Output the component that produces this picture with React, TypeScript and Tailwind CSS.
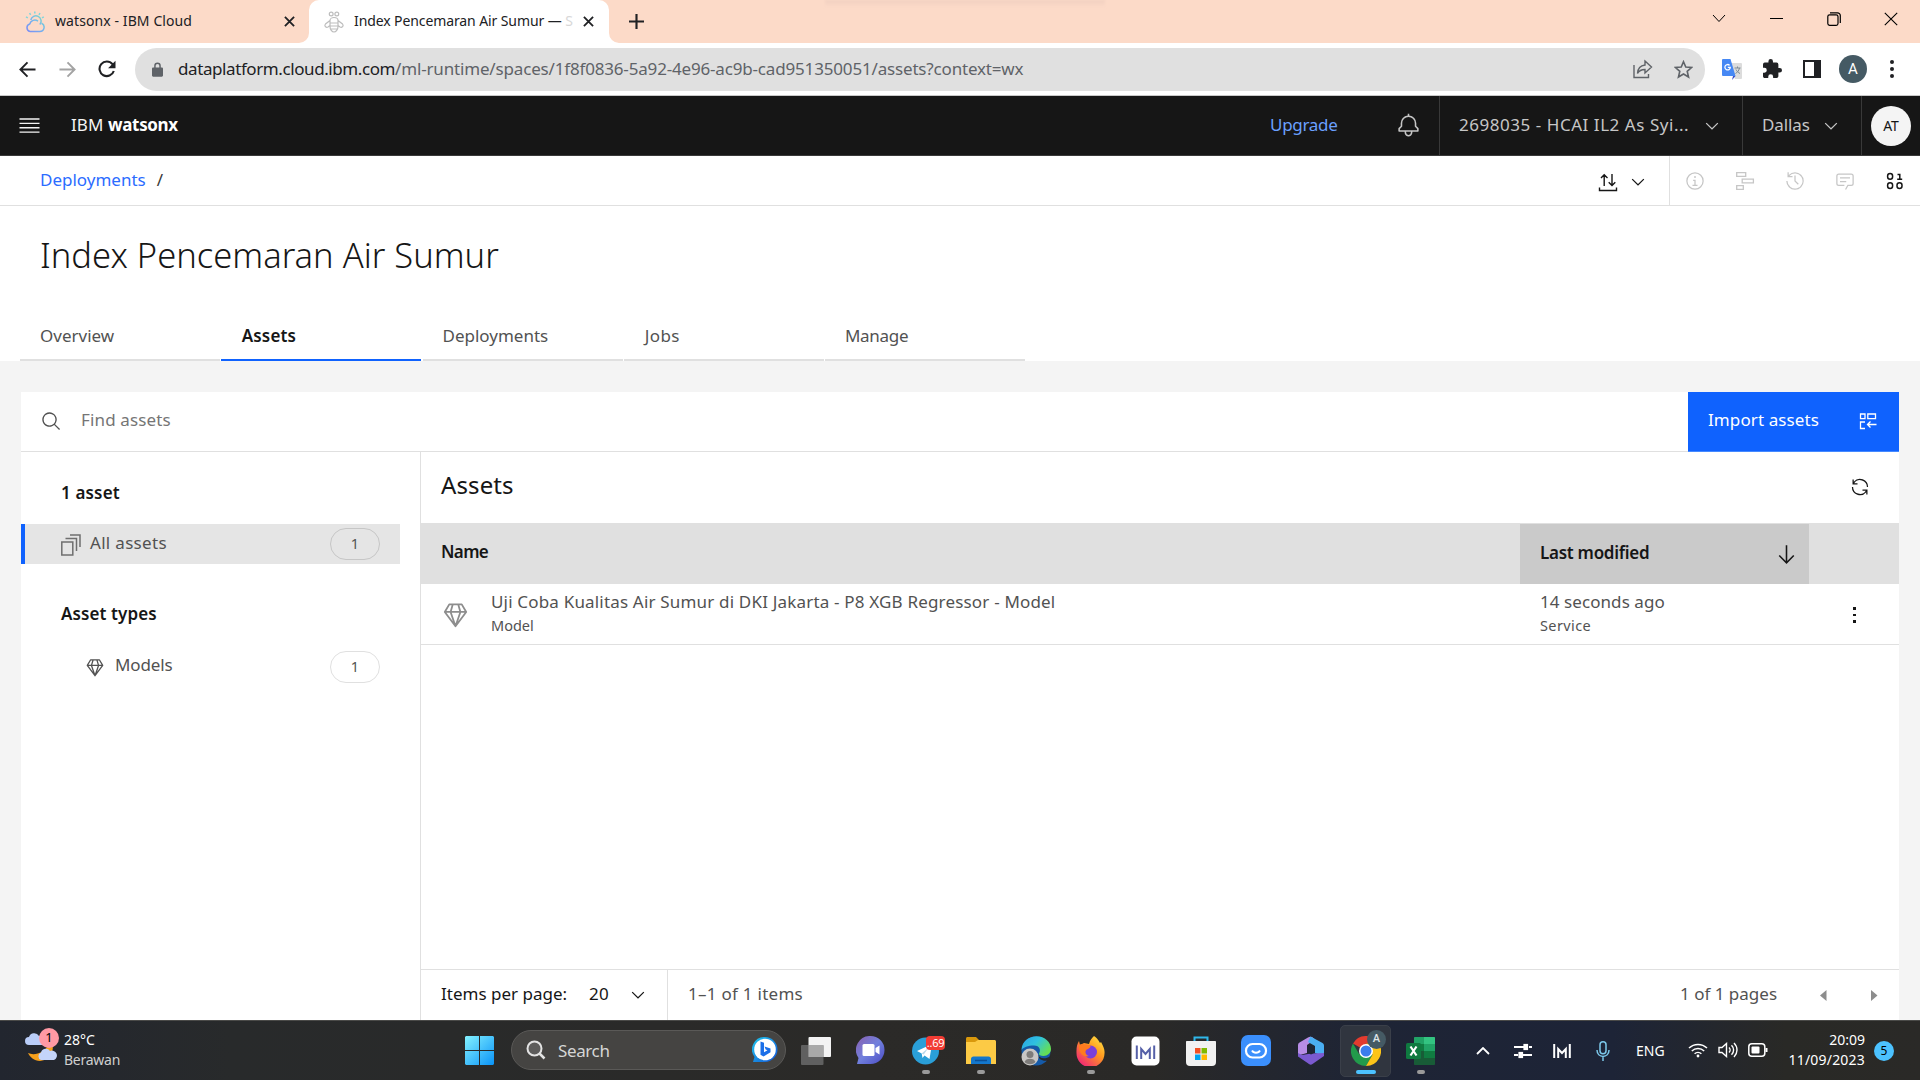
import type { ReactNode } from "react";

type IconProps = { className?: string };

const Carbon = ({ d, className, box = 32 }: { d: string; className?: string; box?: number }) => (
  <svg viewBox={`0 0 ${box} ${box}`} className={className} fill="currentColor">
    <path d={d} />
  </svg>
);

const paths = {
  chevron: "M8 11 3 6l.7-.7L8 9.6l4.3-4.3.7.7z",
  bell: "M28.707 19.293 26 16.586V13a10.014 10.014 0 0 0-9-9.95V1h-2v2.05A10.014 10.014 0 0 0 6 13v3.586l-2.707 2.707A1 1 0 0 0 3 20v3a1 1 0 0 0 1 1h7v.777a5.152 5.152 0 0 0 4.5 5.199A5.006 5.006 0 0 0 21 25v-1h7a1 1 0 0 0 1-1v-3a1 1 0 0 0-.293-.707ZM19 25a3 3 0 0 1-6 0v-1h6Zm8-3H5v-1.586l2.707-2.707A1 1 0 0 0 8 17v-4a8 8 0 0 1 16 0v4a1 1 0 0 0 .293.707L27 20.414Z",
  search: "m29 27.586-7.552-7.552a11.018 11.018 0 1 0-1.414 1.414L27.586 29ZM4 13a9 9 0 1 1 9 9 9.01 9.01 0 0 1-9-9Z",
  renew: "M12 10H6.78A11 11 0 0 1 27 16h2A13 13 0 0 0 6 7.68V4H4v8h8ZM20 22h5.22A11 11 0 0 1 5 16H3a13 13 0 0 0 23 8.32V28h2v-8h-8Z",
  arrowDown: "M24.59 16.59 17 24.17V4h-2v20.17l-7.59-7.58L6 18l10 10 10-10z",
  info: "M17 22v-8h-4v2h2v6h-3v2h8v-2zM16 8a1.5 1.5 0 1 0 1.5 1.5A1.5 1.5 0 0 0 16 8ZM16 30a14 14 0 1 1 14-14 14 14 0 0 1-14 14Zm0-26a12 12 0 1 0 12 12A12 12 0 0 0 16 4Z",
  history: "M20.59 22 15 16.41V7h2v8.58l5 5.01zM16 2A13.94 13.94 0 0 0 6 6.23V2H4v8h8V8H7.08A12 12 0 1 1 4 16H2A14 14 0 1 0 16 2Z",
  chat: "M17.74 30 16 29l4-7h6a2 2 0 0 0 2-2V8a2 2 0 0 0-2-2H6a2 2 0 0 0-2 2v12a2 2 0 0 0 2 2h9v2H6a4 4 0 0 1-4-4V8a4 4 0 0 1 4-4h20a4 4 0 0 1 4 4v12a4 4 0 0 1-4 4h-4.84ZM8 10h16v2H8zM8 16h10v2H8z",
};

const Cloud = () => (
  <svg viewBox="0 0 20 22" className="h-[22px] w-5" fill="none" strokeWidth="1.5">
    <defs>
      <linearGradient id="ibmc" x1="0" y1="1" x2="1" y2="0">
        <stop offset="0" stopColor="#7b8cf5" />
        <stop offset=".55" stopColor="#74b6ee" />
        <stop offset="1" stopColor="#7fe0c0" />
      </linearGradient>
    </defs>
    <path stroke="url(#ibmc)" d="M5 20.500h9.800a4.300 4.300 0 0 0 1.800-8.200M13 10.200a5.300 5.300 0 0 0-8.300 2.800A3.900 3.900 0 0 0 5 20.500M14.800 13.500a5.200 5.200 0 1 0-9-4.500" />
    <path stroke="#7fd6dc" d="M9.800 .5v2M4.600 2l1 1.900M1 5.800l1.800 1M15 2l-1 1.900M18.800 5.800l-1.800 1" />
  </svg>
);

const Bee = () => (
  <svg viewBox="0 0 20 22" className="h-[22px] w-5" fill="none" stroke="#bdbdbd" strokeWidth="1.2">
    <circle cx="7.200" cy="3" r="1.900" />
    <circle cx="12.800" cy="3" r="1.900" />
    <path d="M6 9.500a4 3 0 0 1 8 0v6c0 3-2 5.500-4 5.500s-4-2.500-4-5.500zM6 12h8M6 15h8M7 18h6M6 9.500l-4.500 3.500c-1.500 2 .5 4 2.500 3l2-1.500M14 9.500l4.500 3.500c1.500 2-.5 4-2.500 3l-2-1.500" />
  </svg>
);

const TabClose = () => (
  <svg viewBox="0 0 12 12" className="size-[11px]" stroke="#202124" strokeWidth="2">
    <path d="m1 1 10 10M11 1 1 11" />
  </svg>
);

function TabStrip() {
  return (
    <div className="relative flex h-[43px] shrink-0 bg-[#fcdac8] text-[14px] leading-[40px] text-[#202124]">
      <div className="absolute top-0 left-[825px] h-[7px] w-[280px] bg-gradient-to-b from-[#f1d0c0] to-[#fcdac8] blur-[1px]" />
      <div className="flex w-[299px] items-center pl-[25px]">
        <Cloud />
        <span className="ml-[10px] h-[41px] w-[229px] tracking-[0.09px]">watsonx - IBM Cloud</span>
        <TabClose />
      </div>
      <svg viewBox="0 0 10 10" className="size-[10px] self-end" fill="#fff"><path d="M10 0v10H0A10 10 0 0 0 10 0" /></svg>
      <div className="flex w-[300px] items-center rounded-t-[10px] bg-white pl-[15px]">
        <Bee />
        <span className="ml-[10px] h-[41px] w-[229px] overflow-hidden whitespace-nowrap tracking-[-0.1px]">
          Index Pencemaran Air Sumur — <span className="text-[#d8d8d8]">S</span>
        </span>
        <TabClose />
      </div>
      <svg viewBox="0 0 10 10" className="size-[10px] self-end" fill="#fff"><path d="M0 0v10h10A10 10 0 0 1 0 0" /></svg>
      <div className="flex w-[34px] items-center justify-center">
        <svg viewBox="0 0 14 14" className="size-[15px]" stroke="#202124" strokeWidth="2"><path d="M7 0v14M0 7h14" /></svg>
      </div>
      <div className="mr-px ml-auto flex h-[37px] items-center text-black">
        <span className="flex w-[57px] justify-center"><svg viewBox="0 0 14 9" className="w-[14px]" fill="none" stroke="currentColor" strokeWidth="1"><path d="m1 1 6 6.500L13 1" /></svg></span>
        <span className="flex w-[58px] justify-center"><span className="h-px w-[13px] bg-black" /></span>
        <span className="flex w-[57px] justify-center"><svg viewBox="0 0 14 14" className="size-[14px]" fill="none" stroke="currentColor" strokeWidth="1.200"><rect x=".8" y="2.800" width="10.200" height="10.500" rx="1.800" /><path d="M3 .8h7.500a2.800 2.800 0 0 1 2.800 2.800V11" /></svg></span>
        <span className="flex w-[57px] justify-center"><svg viewBox="0 0 14 14" className="size-[14px]" stroke="currentColor" strokeWidth="1.100"><path d="m.8.8 12.400 12.400M13.200.8.800 13.200" /></svg></span>
      </div>
    </div>
  );
}

function Toolbar() {
  return (
    <div className="flex h-[53px] shrink-0 items-center border-b border-[#c9c9c9] bg-white">
      <span className="ml-[7px] flex w-10 justify-center text-[#202124]">
        <svg viewBox="0 0 18 18" className="size-[17px]" fill="none" stroke="currentColor" strokeWidth="2"><path d="M17.500 9H2M9 1.500 1.500 9 9 16.500" /></svg>
      </span>
      <span className="flex w-10 justify-center text-[#a3a3a3]">
        <svg viewBox="0 0 18 18" className="size-[17px]" fill="none" stroke="currentColor" strokeWidth="2"><path d="M.5 9H16M9 1.500 16.500 9 9 16.500" /></svg>
      </span>
      <span className="flex w-10 justify-center text-[#202124]">
        <svg viewBox="0 0 18 18" className="size-[18px]" fill="none" stroke="currentColor" strokeWidth="2.100"><path d="M15.800 11A7.300 7.300 0 1 1 14.500 4.200L16 6" /><path fill="currentColor" stroke="none" d="M17.500.8v7.400h-7.400z" /></svg>
      </span>
      <div className="ml-2 flex h-[43px] w-[1570px] items-center rounded-full bg-[#e0e0e0] pl-[17px]">
        <svg viewBox="0 0 12 16" className="h-[15px] w-[11px]" fill="#5f6368"><path d="M1.300 5.800H2.400V4a3.600 3.600 0 0 1 7.200 0v1.800h1.100c.7 0 1.300.6 1.300 1.300v7.400c0 .8-.6 1.300-1.300 1.300H1.300C.6 15.800 0 15.300 0 14.500V7.100c0-.7.6-1.300 1.300-1.300ZM4 5.800h4V4a2 2 0 0 0-4 0Z" /></svg>
        <span className="ml-[15px] w-[1455px] whitespace-nowrap text-[17px] leading-[42px] tracking-[-0.17px] text-[#5f6368]">
          <span className="tracking-[-0.41px] text-[#202124]">dataplatform.cloud.ibm.com</span>
          /ml-runtime/spaces/1f8f0836-5a92-4e96-ac9b-cad951350051/assets?context=wx
        </span>
        <span className="flex w-5 shrink-0 justify-center text-[#5f6368]">
          <svg viewBox="0 0 20 20" className="size-5" fill="none" stroke="currentColor" strokeWidth="1.400"><path d="M1 6v12.500h14.500V15M12 2l6.500 6-6.500 6v-3.500c-3.500 0-6 1.200-7.500 4 .3-4.500 3-8 7.500-8.500z" /></svg>
        </span>
        <span className="ml-5 flex w-5 shrink-0 justify-center text-[#5f6368]">
          <svg viewBox="0 0 20 20" className="size-[19px]" fill="none" stroke="currentColor" strokeWidth="1.700"><path d="m10 1.800 2.400 5.600 6.100.5-4.600 4 1.400 6L10 14.700 4.700 17.900l1.400-6-4.600-4 6.100-.5z" /></svg>
        </span>
      </div>
      <span className="ml-[17px] flex w-5 justify-center">
        <svg viewBox="0 0 20 21" className="h-[21px] w-5">
          <path d="M8 4h11a1 1 0 0 1 1 1v14a1 1 0 0 1-1 1h-6z" fill="#dcdcdc" />
          <path d="M1 0h7.500l5 17H1a1 1 0 0 1-1-1V1a1 1 0 0 1 1-1" fill="#4688f4" />
          <path d="M13.500 17 10 21l1-4z" fill="#3850c8" />
          <path d="M5.800 8.300h2.500A2.700 2.700 0 1 1 7.600 6.400" fill="none" stroke="#fff" strokeWidth="1.300" />
          <path d="M12.500 9h6M15.500 7.500V9m2 0c-.7 3-2.300 4.500-4 5.500m.5-4c.8 1.700 2 3 4 4" stroke="#7c8a93" fill="none" />
        </svg>
      </span>
      <span className="ml-5 flex w-5 justify-center">
        <svg viewBox="2 1 21 21" className="mb-0.5 size-[19px]" fill="#202124"><path d="M20.500 11H19V7a2 2 0 0 0-2-2h-4V3.500a2.500 2.500 0 0 0-5 0V5H4a2 2 0 0 0-2 2v3.800h1.500a2.700 2.700 0 0 1 0 5.400H2V20c0 1.100.9 2 2 2h3.800v-1.500a2.700 2.700 0 0 1 5.400 0V22H17a2 2 0 0 0 2-2v-4h1.500a2.500 2.500 0 0 0 0-5" /></svg>
      </span>
      <span className="ml-5 flex w-5 justify-center">
        <span className="mb-px h-[18px] w-[18px] border-[2.500px] border-r-[7px] border-[#202124]" />
      </span>
      <span className="ml-[17px] flex size-7 items-center justify-center rounded-full bg-[#455a64] font-['Roboto'] text-[15px] text-white">A</span>
      <span className="ml-[23px] flex flex-col gap-[3px]">
        <i className="size-1 rounded-full bg-[#202124]" /><i className="size-1 rounded-full bg-[#202124]" /><i className="size-1 rounded-full bg-[#202124]" />
      </span>
    </div>
  );
}

const Chevron = ({ className = "" }: IconProps) => <Carbon box={16} d={paths.chevron} className={`size-5 shrink-0 ${className}`} />;

function Header() {
  return (
    <div className="flex h-[60px] shrink-0 border-b border-[#393939] bg-[#161616] leading-[57px] text-[#c6c6c6]">
      <span className="ml-[17px] flex w-[25px] items-center">
        <svg viewBox="0 0 20 20" className="size-[25px]" fill="#f4f4f4"><path d="M2 4.200h16v1.100H2zM2 7.700h16v1.100H2zM2 11.200h16v1.100H2zM2 14.700h16v1.100H2z" /></svg>
      </span>
      <span className="ml-[29px] tracking-[0.1px] text-[#f4f4f4]">IBM <b className="font-bold tracking-[-0.35px] text-white">watsonx</b></span>
      <span className="ml-auto w-[126px] tracking-[-0.3px] text-[#6ba0ff]">Upgrade</span>
      <span className="flex w-[44px] items-center border-r border-[#393939]"><Carbon d={paths.bell} className="size-[25px]" /></span>
      <span className="flex w-[303px] border-r border-[#393939] pl-[19px]">
        <span className="w-[243px] whitespace-nowrap tracking-[0.54px]">2698035 - HCAI IL2 As Syi...</span><Chevron className="mt-5" />
      </span>
      <span className="flex w-[119px] border-r border-[#393939] pl-[19px]">
        <span className="w-[59px] tracking-[-0.1px]">Dallas</span><Chevron className="mt-5" />
      </span>
      <span className="flex w-[58px] items-center justify-center">
        <span className="flex size-10 items-center justify-center rounded-full bg-[#f4f4f4] text-[14px] leading-9 tracking-[-0.2px] text-[#161616]">AT</span>
      </span>
    </div>
  );
}

function Crumbs() {
  return (
    <div className="flex h-[50px] shrink-0 border-b border-[#e0e0e0] bg-white leading-[48px]">
      <span className="ml-10 text-[#2b6cff]">Deployments</span>
      <span className="ml-[11px] text-[#393939]">/</span>
      <div className="ml-auto flex items-center pt-0.5 text-[#161616]">
        <svg viewBox="0 0 20 20" className="size-5" fill="none" stroke="currentColor" strokeWidth="1.400"><path d="M1.500 15.500v3h17v-3M6.200 14V3M3 6l3.200-3.200L9.500 6M14 2v11.500M10.700 10.200l3.300 3.300 3.300-3.300" /></svg>
        <Chevron className="ml-[10px]" />
      </div>
      <div className="ml-[21px] flex items-center border-l border-[#e0e0e0] text-[#c6c6c6]">
        <span className="flex w-[50px] justify-center"><Carbon d={paths.info} className="size-5" /></span>
        <span className="flex w-[50px] justify-center">
          <svg viewBox="0 0 20 20" className="size-5" fill="none" stroke="currentColor" strokeWidth="1.300"><path d="M1.700 1.700h9v3.600h-9zM7.200 8.200h11.200v3.600H7.200zM1.700 14.700h6.600v3.600H1.700z" /></svg>
        </span>
        <span className="flex w-[50px] justify-center"><Carbon d={paths.history} className="size-5" /></span>
        <span className="flex w-[50px] justify-center"><Carbon d={paths.chat} className="size-5" /></span>
        <span className="flex w-[50px] justify-center text-[#161616]">
          <svg viewBox="0 0 20 20" className="size-5" fill="none" stroke="currentColor" strokeWidth="1.500"><rect x="2.600" y="2.600" width="5" height="5.600" rx="2.500" /><rect x="2.600" y="11.800" width="5" height="5.600" rx="2.500" /><rect x="12" y="11.800" width="5" height="5.600" rx="2.500" /><path d="M12.500 3.500h2.300v4.700M12.200 8.300h5" /></svg>
        </span>
      </div>
    </div>
  );
}

function TitleAndTabs() {
  return (
    <div className="h-[155px] shrink-0 bg-white">
      <h1 className="ml-10 h-[95px] pt-[21px] text-[34.500px] font-light leading-[56px] tracking-[0.02px] text-[#161616]">Index Pencemaran Air Sumur</h1>
      <div className="ml-5 flex h-[60px] gap-[1.250px] leading-[70px] text-[#525252]">
        <span className="w-[200px] border-b-2 border-[#e0e0e0] pl-5">Overview</span>
        <span className="w-[200px] border-b-2 border-[#0f62fe] pl-[20.500px] font-semibold tracking-[0.15px] text-[#161616]">Assets</span>
        <span className="w-[200px] border-b-2 border-[#e0e0e0] pl-5">Deployments</span>
        <span className="w-[200px] border-b-2 border-[#e0e0e0] pl-[21px] tracking-[0.4px]">Jobs</span>
        <span className="w-[200px] border-b-2 border-[#e0e0e0] pl-5 tracking-[-0.3px]">Manage</span>
      </div>
    </div>
  );
}

const Gem = ({ className = "" }: IconProps) => (
  <svg viewBox="0 0 26 28" className={className} fill="none" stroke="currentColor" strokeWidth="2" strokeLinejoin="round">
    <path d="M6 1.500h14l5 8.500-12 16L1 10zM1 10h24M10 1.500 7.500 10 13 26l5.500-16L16 1.500" />
  </svg>
);

const Pill = ({ className = "" }: IconProps) => (
  <span className={"flex h-8 w-[50px] items-center justify-center rounded-full border text-[14.500px] leading-[28px] text-[#525252] " + className}>
    <span className="pb-0.5">1</span>
  </span>
);

function Sidebar() {
  return (
    <div className="w-[400px] border-r border-[#e0e0e0]">
      <div className="mt-[25px] pl-10 font-semibold leading-[31px] tracking-[0.16px] text-[#161616]">1 asset</div>
      <div className="mt-4 mr-5 flex h-10 items-center border-l-4 border-[#0f62fe] bg-[#e5e5e5] pl-9">
        <svg viewBox="0 0 20 22" className="mt-px h-[22px] w-5" fill="none" stroke="#6f6f6f" strokeWidth="1.500"><rect x=".8" y="8" width="11" height="13" /><path d="M4.500 4.500h11V17M9 1h10v12" /></svg>
        <span className="ml-[9px] flex-1 pb-[3px] tracking-[0.31px]">All assets</span>
        <Pill className="mr-5 border-[#c6c6c6]" />
      </div>
      <div className="mt-[35px] pl-10 font-semibold leading-[30px] tracking-[0.11px] text-[#161616]">Asset types</div>
      <div className="mt-[18px] mr-5 flex h-10 items-center pl-[65px]">
        <Gem className="mt-px h-[18px] w-[18px]" />
        <span className="ml-[11px] flex-1 pb-[4px] tracking-[-0.15px]">Models</span>
        <Pill className="mr-5 border-[#e0e0e0]" />
      </div>
    </div>
  );
}

function Assets() {
  return (
    <div className="flex flex-1 flex-col">
      <div className="flex h-[71px] items-center justify-between pr-[29px] pl-[20px]">
        <h2 className="pb-[5px] text-[24px] tracking-[0.1px] text-[#161616]">Assets</h2>
        <Carbon d={paths.renew} className="mb-0.5 size-5 text-[#161616]" />
      </div>
      <div className="flex h-[61px] bg-[#e0e0e0] font-semibold leading-[57px] text-[#161616]">
        <span className="w-[1099px] pl-[20px] tracking-[-0.65px]">Name</span>
        <span className="mt-px flex w-[289px] items-center justify-between bg-[#cacaca] pr-[10px] pl-5">
          <span className="pb-[4px] tracking-[-0.27px]">Last modified</span>
          <Carbon d={paths.arrowDown} className="size-[25px]" />
        </span>
      </div>
      <div className="flex h-[61px] shrink-0 border-b border-[#e0e0e0]">
        <Gem className="mt-[19px] ml-[21px] h-[25px] w-[27px] text-[#8d8d8d]" />
        <span className="ml-[22px] w-[1029px]">
          <span className="block pt-[6px] leading-[24px] tracking-[0.18px]">Uji Coba Kualitas Air Sumur di DKI Jakarta - P8 XGB Regressor - Model</span>
          <span className="block text-[14.500px] leading-[23px]">Model</span>
        </span>
        <span className="w-[305px] pl-5">
          <span className="block pt-[6px] leading-[24px] tracking-[0.07px]">14 seconds ago</span>
          <span className="block text-[14.500px] leading-[23px] tracking-[0.4px]">Service</span>
        </span>
        <span className="ml-[28px] flex flex-col items-center justify-center gap-[4px] pt-0.5">
          <i className="size-[2.500px] bg-[#161616]" /><i className="size-[2.500px] bg-[#161616]" /><i className="size-[2.500px] bg-[#161616]" />
        </span>
      </div>
      <div className="flex-1" />
      <div className="flex h-[51px] border-t border-[#e0e0e0] leading-[48px]">
        <span className="w-[148px] pl-[20px] text-[#161616]">Items per page:</span>
        <span className="flex w-[99px] border-r border-[#e0e0e0] pl-[20px] text-[#161616]"><span className="w-[39px] tracking-[0.3px]">20</span><Chevron className="mt-[15px]" /></span>
        <span className="pl-5 tracking-[0.27px]">1–1 of 1 items</span>
        <span className="ml-auto w-[139px]">1 of 1 pages</span>
        <svg viewBox="0 0 80 50" className="h-[50px] w-[80px]" fill="#8d8d8d"><path d="m1 25.500 6.500-5.500v11zM58.500 25.500 52 20v11z" /></svg>
      </div>
    </div>
  );
}

const Cell = ({ children, run = false }: { children: ReactNode; run?: boolean }) => (
  <span className="relative flex w-[55px] items-center justify-center">
    {children}
    {run && <i className="absolute bottom-[6px] h-1 w-2 rounded-full bg-[#9a9a9a]" />}
  </span>
);

function Taskbar() {
  return (
    <div className="flex h-[60px] shrink-0 border-t border-[#4a4a48] bg-[linear-gradient(90deg,#22262f_0%,#282a2b_12%,#2b2a28_45%,#2a2927_60%,#1e2435_71%,#1d2437_84%,#292926_93%,#2a2927_100%)] text-white">
      <div className="relative flex w-[452px] pl-[25px]">
        <svg viewBox="0 0 32 36" className="mt-[8px] h-[36px] w-[32px]">
          <path d="M27 13c3 9-2 18-12 19-6 0-10-4-12-8 6 3 17 0 20-8z" fill="#f6a01c" />
          <path d="M4 16a4 4 0 0 1 0-8 5.500 5.500 0 0 1 10-1 4.500 4.500 0 0 1 6 9z" fill="#b9cdf8" />
          <path d="M16 31a4 4 0 0 1 0-7.500 5 5 0 0 1 9-1.500 4 4 0 0 1 4 9z" fill="#c4d4fa" />
        </svg>
        <span className="absolute top-[7px] left-[39px] flex size-5 items-center justify-center rounded-full bg-[#ff99a4] text-[13px] text-black">1</span>
        <div className="ml-[7px] pt-[9px] text-[14px] leading-5"><div>28°C</div><div className="tracking-[-0.25px] text-[#cfcfcf]">Berawan</div></div>
      </div>
      <Cell>
        <svg viewBox="0 0 29 29" className="size-[29px]"><defs><linearGradient id="win" x1="0" y1="0" x2="1" y2="1"><stop offset="0" stopColor="#84f2ff" /><stop offset="1" stopColor="#0a93f8" /></linearGradient></defs><path fill="url(#win)" d="M1 0h13v14H0V1zM15 0h13l1 1v13H15zM0 15h14v14H1l-1-1zM15 15h14v13l-1 1H15z" /></svg>
      </Cell>
      <div className="mt-[9px] ml-1 flex h-10 w-[275px] items-center rounded-full border border-[#5a5957] bg-[#454442] pl-[14px]">
        <svg viewBox="0 0 20 20" className="size-5" fill="#ffffff22" stroke="#e3e3e3" strokeWidth="2"><circle cx="8.500" cy="8.500" r="7" /><path d="m13.500 13.500 5 5" strokeWidth="2.500" /></svg>
        <span className="ml-[12px] w-[194px] text-[17px] leading-[39px] tracking-[-0.38px] text-[#d6d6d6]">Search</span>
        <svg viewBox="0 0 26 26" className="size-[26px]"><defs><linearGradient id="bing" x1="0" y1="0" x2="1" y2="1"><stop offset="0" stopColor="#1ec8ee" /><stop offset="1" stopColor="#1352d6" /></linearGradient></defs><path d="M13 0a12.500 12.500 0 0 1 0 25H1l1.500-5A12.500 12.500 0 0 1 13 0" fill="url(#bing)" /><circle cx="13" cy="12.500" r="10.800" fill="#fff" /><path d="m8.500 4.500 3.500 1.300v9.500l3.500-2-1.800-.9-1.200-3 6 2.200v3.600l-7 4.300-3-1.800z" fill="#1b6fe8" /></svg>
      </div>
      <div className="ml-[2px] flex">
        <Cell><svg viewBox="0 0 30 28" className="h-[28px] w-[30px]"><rect x="7.500" width="22.500" height="20" rx="1" fill="#f3f3f3" /><rect y="8" width="22.500" height="20" rx="1" fill="#6a6a6a" fillOpacity=".85" /><rect x="7.500" y="8" width="15" height="12" fill="#a9a9a9" /></svg></Cell>
        <Cell><svg viewBox="0 0 29 29" className="size-[29px]"><defs><linearGradient id="chat" x1="0" y1="0" x2="1" y2="1"><stop offset="0" stopColor="#8a5fae" /><stop offset=".5" stopColor="#7180dd" /><stop offset="1" stopColor="#4b4bc4" /></linearGradient></defs><path d="M14.500 0a14 14 0 0 1 0 28L1 28l1.500-6A14 14 0 0 1 14.500 0" fill="url(#chat)" /><rect x="6.500" y="8" width="12" height="12" rx="1.500" fill="#fff" /><path d="m19.500 12 4-2.500v9l-4-2.500z" fill="#fff" /></svg></Cell>
        <Cell run>
          <svg viewBox="0 0 28 28" className="size-[28px]"><circle cx="13.500" cy="14" r="13.500" fill="#2a9fd8" /><path d="m5 14 15-7-2.500 15-5-3.500-2 2.500-.8-4.500z" fill="#fff" /><path d="m9.700 16.500 7-6-5 7z" fill="#b8d8ea" /></svg>
          <span className="absolute top-[15px] left-[28px] flex h-[14px] w-[19px] items-center justify-center rounded-[4px] bg-[#f23c34] text-[11px] tracking-[-0.3px]">..69</span>
        </Cell>
        <Cell run><svg viewBox="0 0 30 28" className="h-[28px] w-[30px]"><path d="M0 1.500C0 .7.700 0 1.500 0H10l3 3-3 4H0z" fill="#d9980c" /><path d="M0 5h9l3-2h16.500c.8 0 1.500.7 1.500 1.500V27H0z" fill="#fcca45" /><path d="M5 27v-5c0-1.500 1-2.500 2.500-2.500h15c1.500 0 2.500 1 2.500 2.500v5z" fill="#1477cc" /><path d="M9 23.500h12" stroke="#0b4f96" strokeWidth="1.500" /></svg></Cell>
        <Cell><svg viewBox="0 0 30 30" className="size-[30px]"><defs><linearGradient id="edge" x1="0" y1="0" x2="1" y2=".6"><stop offset="0" stopColor="#2a9fe6" /><stop offset=".5" stopColor="#2fc3df" /><stop offset="1" stopColor="#66df52" /></linearGradient></defs><circle cx="15" cy="15" r="14.500" fill="#155aa8" /><path d="M.5 14C1 5 8 .3 15.500.3 24 .3 30 6.500 30 13c0 4-3.500 7-7.500 7-3 0-5-1-4.500-2.500 2-3 1-8-5-8C7 9.500 2 11.500.5 14" fill="url(#edge)" /><path d="M17 18.500c1.500 4.500 7 5 13 1.500v3l-3 1.500c-5 1-10-1-10-6" fill="#282828" /><circle cx="9" cy="21" r="8.500" fill="#c9c7c5" /><circle cx="9" cy="18.500" r="3.500" fill="#7e7c7a" /><path d="M3.500 26c1-4.500 10-4.500 11 0-3 3-8 3-11 0" fill="#7e7c7a" /></svg></Cell>
        <Cell run><svg viewBox="0 0 29 30" className="h-[30px] w-[29px]"><defs><linearGradient id="fox" x1="1" y1="0" x2=".2" y2="1"><stop offset="0" stopColor="#fff04a" /><stop offset=".45" stopColor="#ff9a1f" /><stop offset="1" stopColor="#f0207a" /></linearGradient></defs><path d="M18 0c4 3 5 5 6 7l1-1c2 4 4 7 3.500 11.500A14 14 0 0 1 .5 17C.3 12 1 8 3 5l1 4 4-2 5 1c1-4 3-6 5-8" fill="url(#fox)" /><circle cx="14.500" cy="16" r="6.500" fill="#7a3fdc" /><path d="M3 9c4-2 7 0 10 0 3 1 1 3-1 4-4 1-3 6 1 7-6 2-11-4-10-11" fill="#ff7b1f" /></svg></Cell>
        <Cell><svg viewBox="0 0 29 30" className="h-[30px] w-[29px]"><rect x=".5" y=".5" width="28" height="29" rx="5" fill="#fff" /><path d="M5.800 9.500v13.500M23.200 9.500v13.500M10.200 23V13l4.300 5 4.300-5v10" fill="none" stroke="#5560a8" strokeWidth="2" /></svg></Cell>
        <Cell><svg viewBox="0 0 30 30" className="size-[30px]"><path d="M8.500 6V1.500h13V6" fill="none" stroke="#2fb7ea" strokeWidth="2" /><path d="M1 5h28c.5 0 1 .4 1 1v20a4 4 0 0 1-4 4H4a4 4 0 0 1-4-4V6c0-.6.4-1 1-1" fill="#f1f1f1" /><path fill="#f25022" d="M9 12h5.500v5.500H9z" /><path fill="#7fba00" d="M15.500 12H21v5.500h-5.500z" /><path fill="#00a4ef" d="M9 18.500h5.500V24H9z" /><path fill="#ffb900" d="M15.500 18.500H21V24h-5.500z" /></svg></Cell>
        <Cell><svg viewBox="0 0 30 31" className="h-[31px] w-[30px]"><rect width="30" height="31" rx="7" fill="#3b8ffc" /><rect x="5" y="9" width="20" height="13.500" rx="6.500" fill="none" stroke="#fff" strokeWidth="2.200" /><path d="M11 15.500c1.500 3 6.500 3 8 0" fill="none" stroke="#fff" strokeWidth="1.800" /></svg></Cell>
        <Cell><svg viewBox="0 0 26 29" className="h-[29px] w-[26px]"><path d="M10 1.500 1.500 6.500A3 3 0 0 0 0 9v10.500L9 17V9l8-5.500-3-2.500a4 4 0 0 0-4 .5" fill="#b78de6" /><path d="m12.500.5 12 6.500A3 3 0 0 1 26 9.500V20l-9-3V10l-7-4z" fill="#4aaef2" /><path d="M26 17v3l-11.500 8a3 3 0 0 1-3.500 0L0 20.500 0 17l4 2 9-1.500z" fill="#7b5ad0" /><path d="M9.500 10.500 13 8.500l4 2v6l-4 2-3.500-2z" fill="#1e2535" /></svg></Cell>
        <Cell>
          <span className="absolute inset-x-[2px] top-[4px] bottom-[3px] rounded-[5px] border border-[#3a3f49] bg-[#30353f]" />
          <svg viewBox="0 0 30 30" className="relative size-[30px]"><path d="M15 15 2 7.500A15 15 0 0 1 28 7.500H15z" fill="#e33b2e" /><path d="M15 15 8.500 18.800 2 7.500A15 15 0 0 0 15 30l6.500-11.200z" fill="#229a4b" /><path d="M15 7.500h13A15 15 0 0 1 15 30l6.500-11.200z" fill="#fcc419" /><circle cx="15" cy="15" r="7" fill="#fff" /><circle cx="15" cy="15" r="5.500" fill="#3b7ded" /></svg>
          <span className="absolute top-[9px] left-[29px] flex size-[19px] items-center justify-center rounded-full bg-[#455a64] font-['Roboto'] text-[11px] font-medium text-[#dfe5e8]">A</span>
          <i className="absolute bottom-[6px] h-1 w-5 rounded-full bg-[#4cc2ff]" />
        </Cell>
        <Cell run><svg viewBox="0 0 29 28" className="h-[28px] w-[29px]"><path fill="#21a366" d="M8 1c0-.6.400-1 1-1h9v7H8z" /><path fill="#33c481" d="M18 0h10c.6 0 1 .4 1 1v6H18z" /><path fill="#107c41" d="M8 7h10v7H8zM18 14h11v7H18z" /><path fill="#21a366" d="M18 7h11v7H18z" /><path fill="#185c37" d="M8 14h10v7h11v6c0 .6-.4 1-1 1H9c-.6 0-1-.4-1-1z" /><rect y="6" width="15" height="16" rx="1.500" fill="#0f7a40" /><path d="m4.500 9.500 6 9M10.500 9.500l-6 9" stroke="#fff" strokeWidth="2.200" /></svg></Cell>
      </div>
      <div className="ml-[15px] flex items-center">
        <span className="flex w-10 justify-center"><svg viewBox="0 0 14 8" className="w-[14px]" fill="none" stroke="#fff" strokeWidth="1.800"><path d="m1 7 6-6 6 6" /></svg></span>
        <span className="flex w-10 justify-center"><svg viewBox="0 0 18 16" className="w-[18px]" fill="#fff" stroke="#fff" strokeWidth="2.200"><path d="M0 4h10M15 4h3M0 12h4M8 12h10" /><rect x="10.500" y="2" width="2.500" height="4" /><rect x="5.500" y="10" width="2.500" height="4" /></svg></span>
        <span className="flex w-10 justify-center"><svg viewBox="0 0 18 14" className="w-[18px] -translate-x-px" fill="none" stroke="#fff" strokeWidth="2"><path d="M1.200 0v14M16.800 0v14M5.200 14V5l3.800 4 3.800-4v9" /></svg></span>
        <span className="flex w-10 justify-center"><svg viewBox="0 0 14 20" className="h-5 w-[14px]" fill="none" stroke="#7cc8ea" strokeWidth="1.500"><rect x="4" y=".8" width="6" height="12" rx="3" /><path d="M1 9c0 8.500 12 8.500 12 0M7 15.500V20" /></svg></span>
        <span className="ml-[13px] w-[52px] text-[14px]">ENG</span>
        <svg viewBox="0 0 20 16" className="mb-px w-5" fill="none" stroke="#fff" strokeWidth="1.500"><path d="M1 6a13 13 0 0 1 18 0M3.800 9a9 9 0 0 1 12.400 0M6.600 11.800a5 5 0 0 1 6.800 0" /><circle cx="10" cy="14" r="1.400" fill="#fff" stroke="none" /></svg>
        <svg viewBox="0 0 20 16" className="mb-px ml-[10px] w-5" fill="none" stroke="#fff" strokeWidth="1.400"><path d="M1 5.500h3L8.500 1.500v13L4 10.500H1zM11 5.500c1.500 1.500 1.500 3.500 0 5M13.500 3.200c2.800 2.800 2.800 6.800 0 9.600M16 1c4 4 4 10 0 14" /></svg>
        <svg viewBox="0 0 20 14" className="mb-px ml-[10px] w-5" fill="none" stroke="#fff" strokeWidth="1.500"><rect x=".8" y=".8" width="16" height="12.400" rx="3" /><path d="M18.500 5v4" strokeWidth="2" /><rect x="3.500" y="3.500" width="8" height="7" rx="1" fill="#fff" stroke="none" /></svg>
        <div className="w-[97px] pb-px text-right text-[14px] leading-5"><div>20:09</div><div className="tracking-[0.2px]">11/09/2023</div></div>
        <span className="ml-[9px] flex size-5 items-center justify-center rounded-full bg-[#4cc2ff] text-[12px] text-black">5</span>
      </div>
    </div>
  );
}

export default function App() {
  return (
    <div className="flex h-[1080px] w-[1920px] flex-col overflow-hidden bg-[#f4f4f4] font-['Noto_Sans',sans-serif] text-[17px] text-[#525252]">
      <TabStrip />
      <Toolbar />
      <Header />
      <Crumbs />
      <TitleAndTabs />
      <div className="mx-[21px] mt-[31px] flex flex-1 flex-col bg-white">
        <div className="flex h-[60px] shrink-0 border-b border-[#e0e0e0]">
          <span className="flex flex-1 items-center pl-5 text-[#757575]">
            <Carbon d={paths.search} className="size-[21px] text-[#525252]" />
            <span className="ml-[19px] pb-[3px] tracking-[0.14px]">Find assets</span>
          </span>
          <span className="-mb-px flex w-[211px] items-center border-b border-[#4589ff] bg-[#0f62fe] pl-5 text-white">
            <span className="w-[150px] pb-[3px] tracking-[0.1px]">Import assets</span>
            <svg viewBox="0 0 20 20" className="mb-px size-5" fill="none" stroke="currentColor" strokeWidth="1.300"><path d="M2.500 3h4.500v4.700H2.500zM9.800 3H17.500v4.700H9.800zM7 11H2.500v6.500H7M18.500 13.500H9.500M12.500 10.500l-3 3 3 3" /></svg>
          </span>
        </div>
        <div className="flex flex-1">
          <Sidebar />
          <Assets />
        </div>
      </div>
      <Taskbar />
    </div>
  );
}
